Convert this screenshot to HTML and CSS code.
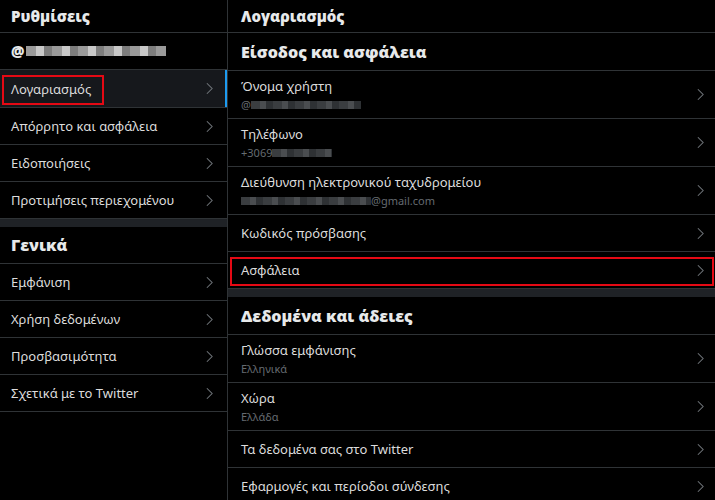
FILE: index.html
```html
<!DOCTYPE html>
<html lang="el">
<head>
  <meta charset="UTF-8" />
  <title>Ρυθμίσεις</title>
  <link rel="stylesheet" href="styles.css">
</head>
<body>
  <div class="app">
    <div class="nav">
      <div class="title">Ρυθμίσεις</div>
      <div class="user">@<span class="blur w140"></span></div>
      <div class="row active">
        <span>Λογαριασμός</span>
        <svg class="chev" viewBox="0 0 8 14"><path d="M1 1l6 6-6 6"/></svg>
        <div class="mark mark-left"></div>
      </div>
      <div class="row"><span>Απόρρητο και ασφάλεια</span><svg class="chev" viewBox="0 0 8 14"><path d="M1 1l6 6-6 6"/></svg></div>
      <div class="row"><span>Ειδοποιήσεις</span><svg class="chev" viewBox="0 0 8 14"><path d="M1 1l6 6-6 6"/></svg></div>
      <div class="row"><span>Προτιμήσεις περιεχομένου</span><svg class="chev" viewBox="0 0 8 14"><path d="M1 1l6 6-6 6"/></svg></div>
      <div class="band"></div>
      <div class="section">Γενικά</div>
      <div class="row"><span>Εμφάνιση</span><svg class="chev" viewBox="0 0 8 14"><path d="M1 1l6 6-6 6"/></svg></div>
      <div class="row"><span>Χρήση δεδομένων</span><svg class="chev" viewBox="0 0 8 14"><path d="M1 1l6 6-6 6"/></svg></div>
      <div class="row"><span>Προσβασιμότητα</span><svg class="chev" viewBox="0 0 8 14"><path d="M1 1l6 6-6 6"/></svg></div>
      <div class="row"><span>Σχετικά με το Twitter</span><svg class="chev" viewBox="0 0 8 14"><path d="M1 1l6 6-6 6"/></svg></div>
    </div>

    <div class="main">
      <div class="title">Λογαριασμός</div>
      <div class="section">Είσοδος και ασφάλεια</div>
      <div class="row tall">
        <div class="text">
          <span>Όνομα χρήστη</span>
          <span class="sub">@<span class="blur w110"></span></span>
        </div>
        <svg class="chev" viewBox="0 0 8 14"><path d="M1 1l6 6-6 6"/></svg>
      </div>
      <div class="row tall">
        <div class="text">
          <span>Τηλέφωνο</span>
          <span class="sub">+3069<span class="blur w60"></span></span>
        </div>
        <svg class="chev" viewBox="0 0 8 14"><path d="M1 1l6 6-6 6"/></svg>
      </div>
      <div class="row tall">
        <div class="text">
          <span>Διεύθυνση ηλεκτρονικού ταχυδρομείου</span>
          <span class="sub"><span class="blur w130"></span>@gmail.com</span>
        </div>
        <svg class="chev" viewBox="0 0 8 14"><path d="M1 1l6 6-6 6"/></svg>
      </div>
      <div class="row"><span>Κωδικός πρόσβασης</span><svg class="chev" viewBox="0 0 8 14"><path d="M1 1l6 6-6 6"/></svg></div>
      <div class="row">
        <span>Ασφάλεια</span>
        <svg class="chev" viewBox="0 0 8 14"><path d="M1 1l6 6-6 6"/></svg>
        <div class="mark mark-right"></div>
      </div>
      <div class="band"></div>
      <div class="section">Δεδομένα και άδειες</div>
      <div class="row tall">
        <div class="text">
          <span>Γλώσσα εμφάνισης</span>
          <span class="sub">Ελληνικά</span>
        </div>
        <svg class="chev" viewBox="0 0 8 14"><path d="M1 1l6 6-6 6"/></svg>
      </div>
      <div class="row tall">
        <div class="text">
          <span>Χώρα</span>
          <span class="sub">Ελλάδα</span>
        </div>
        <svg class="chev" viewBox="0 0 8 14"><path d="M1 1l6 6-6 6"/></svg>
      </div>
      <div class="row"><span>Τα δεδομένα σας στο Twitter</span><svg class="chev" viewBox="0 0 8 14"><path d="M1 1l6 6-6 6"/></svg></div>
      <div class="row"><span>Εφαρμογές και περίοδοι σύνδεσης</span><svg class="chev" viewBox="0 0 8 14"><path d="M1 1l6 6-6 6"/></svg></div>
    </div>
  </div>
</body>
</html>
```

FILE: styles.css
```css
body {
  margin: 0;
  background: #000;
  color: #dcdcdc;
  font-family: "Noto Sans", "Open Sans", sans-serif;
  font-size: 13px;
  overflow: hidden;
}
.app {
  display: flex;
  height: 500px;
}
.nav {
  width: 227px;
  flex-shrink: 0;
  border-right: 1px solid #2f3336;
}
.main {
  flex: 1;
  min-width: 0;
}
.title,
.section,
.user {
  display: flex;
  align-items: center;
  font-family: "Open Sans", sans-serif;
  font-weight: 800;
  color: #e7e9ea;
  border-bottom: 1px solid #2f3336;
  box-sizing: border-box;
}
.title {
  height: 33px;
  font-size: 15px;
  padding-left: 11px;
}
.main .title {
  padding-left: 13px;
}
.section {
  height: 37px;
  font-size: 16px;
  padding-left: 11px;
}
.main .section {
  height: 38px;
  padding-left: 13px;
}
.user {
  height: 37px;
  font-size: 15px;
  padding-left: 11px;
}
.user .blur {
  margin-left: 2px;
  height: 10px;
}
.row {
  position: relative;
  display: flex;
  align-items: center;
  justify-content: space-between;
  height: 37px;
  box-sizing: border-box;
  padding: 0 14px 0 11px;
  border-bottom: 1px solid #2f3336;
}
.main .row {
  padding: 0 11px 0 13px;
}
.row.tall {
  height: 48px;
}
.row.active {
  height: 38px;
  background: #16181c;
  box-shadow: inset -2px 0 0 #1d9bf0;
}
.text {
  display: flex;
  flex-direction: column;
  gap: 2px;
}
.sub {
  display: flex;
  align-items: center;
  font-size: 11px;
  color: #656b70;
}
.chev {
  width: 7px;
  height: 13px;
  fill: none;
  stroke: #71767b;
  stroke-width: 1.2;
}
.band {
  height: 8px;
  background: #1f2226;
}
.blur {
  display: inline-block;
  height: 8px;
  background: repeating-linear-gradient(90deg, #3a3d40 0 9px, #4a4d50 9px 15px, #2e3134 15px 22px);
  filter: blur(0.6px);
}
.user .blur {
  background: repeating-linear-gradient(90deg, #9a9a9a 0 10px, #c8c8c8 10px 18px, #7d7d7d 18px 26px);
}
.w60 { width: 60px; }
.w110 { width: 110px; }
.w130 { width: 130px; }
.w140 { width: 140px; }
.mark {
  position: absolute;
  border: 2px solid #e50914;
  pointer-events: none;
}
.mark-left {
  left: 2px;
  top: 5px;
  width: 98px;
  height: 26px;
}
.mark-right {
  left: 2px;
  right: 1px;
  top: 5px;
  bottom: 2px;
}
```
